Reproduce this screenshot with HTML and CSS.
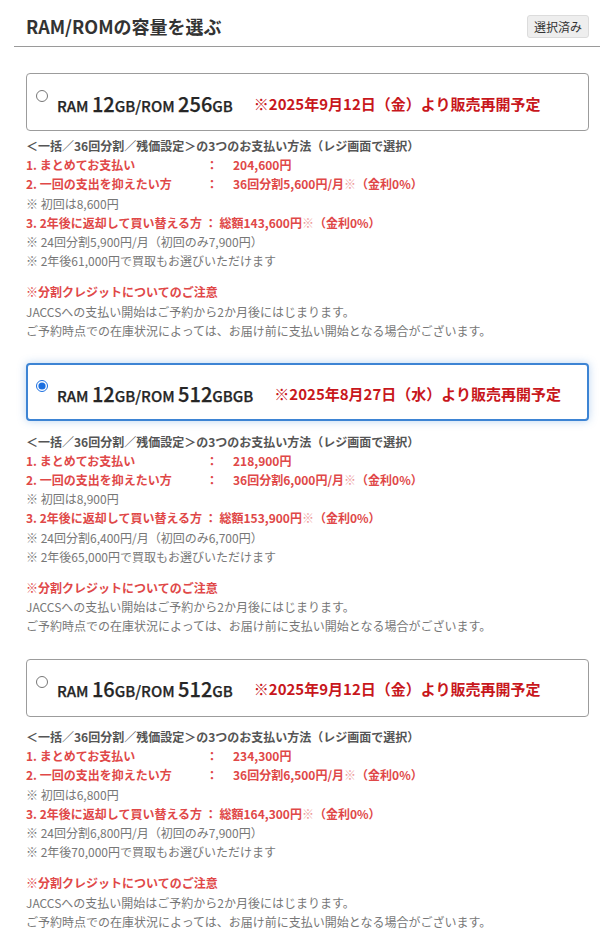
FILE: index.html
```html
<!DOCTYPE html>
<html lang="ja">
<head>
<meta charset="utf-8">
<title>RAM/ROMの容量を選ぶ</title>
<link rel="stylesheet" href="styles.css">
</head>
<body>
<div class="header">
  <h2 class="title">RAM/ROMの容量を選ぶ</h2>
  <span class="badge">選択済み</span>
</div>
<div class="options">
  <label class="card">
    <input class="radio" type="radio" name="cap">
    <span class="spec">RAM <b>12</b>GB/ROM <b>256</b>GB</span>
    <span class="notice">※2025年9月12日（金）より販売再開予定</span>
  </label>
  <div class="pay first">
    <p class="pay-head">＜一括／36回分割／残価設定＞の3つのお支払い方法（レジ画面で選択）</p>
    <p class="red"><span class="lbl">1. まとめてお支払い</span><span class="colon">：</span><span class="val">204,600円</span></p>
    <p class="red"><span class="lbl">2. 一回の支出を抑えたい方</span><span class="colon">：</span><span class="val">36回分割5,600円/月<span class="kome">※</span>（金利0%）</span></p>
    <p class="gray">※ 初回は8,600円</p>
    <p class="red">3. 2年後に返却して買い替える方 ： 総額143,600円<span class="kome">※</span>（金利0%）</p>
    <p class="gray">※ 24回分割5,900円/月（初回のみ7,900円）</p>
    <p class="gray">※ 2年後61,000円で買取もお選びいただけます</p>
  </div>
  <div class="note">
    <p class="note-head">※分割クレジットについてのご注意</p>
    <p class="gray">JACCSへの支払い開始はご予約から2か月後にはじまります。</p>
    <p class="gray">ご予約時点での在庫状況によっては、お届け前に支払い開始となる場合がございます。</p>
  </div>

  <label class="card selected">
    <input class="radio" type="radio" name="cap" checked>
    <span class="spec">RAM <b>12</b>GB/ROM <b>512</b>GBGB</span>
    <span class="notice">※2025年8月27日（水）より販売再開予定</span>
  </label>
  <div class="pay">
    <p class="pay-head">＜一括／36回分割／残価設定＞の3つのお支払い方法（レジ画面で選択）</p>
    <p class="red"><span class="lbl">1. まとめてお支払い</span><span class="colon">：</span><span class="val">218,900円</span></p>
    <p class="red"><span class="lbl">2. 一回の支出を抑えたい方</span><span class="colon">：</span><span class="val">36回分割6,000円/月<span class="kome">※</span>（金利0%）</span></p>
    <p class="gray">※ 初回は8,900円</p>
    <p class="red">3. 2年後に返却して買い替える方 ： 総額153,900円<span class="kome">※</span>（金利0%）</p>
    <p class="gray">※ 24回分割6,400円/月（初回のみ6,700円）</p>
    <p class="gray">※ 2年後65,000円で買取もお選びいただけます</p>
  </div>
  <div class="note">
    <p class="note-head">※分割クレジットについてのご注意</p>
    <p class="gray">JACCSへの支払い開始はご予約から2か月後にはじまります。</p>
    <p class="gray">ご予約時点での在庫状況によっては、お届け前に支払い開始となる場合がございます。</p>
  </div>

  <label class="card">
    <input class="radio" type="radio" name="cap">
    <span class="spec">RAM <b>16</b>GB/ROM <b>512</b>GB</span>
    <span class="notice">※2025年9月12日（金）より販売再開予定</span>
  </label>
  <div class="pay">
    <p class="pay-head">＜一括／36回分割／残価設定＞の3つのお支払い方法（レジ画面で選択）</p>
    <p class="red"><span class="lbl">1. まとめてお支払い</span><span class="colon">：</span><span class="val">234,300円</span></p>
    <p class="red"><span class="lbl">2. 一回の支出を抑えたい方</span><span class="colon">：</span><span class="val">36回分割6,500円/月<span class="kome">※</span>（金利0%）</span></p>
    <p class="gray">※ 初回は6,800円</p>
    <p class="red">3. 2年後に返却して買い替える方 ： 総額164,300円<span class="kome">※</span>（金利0%）</p>
    <p class="gray">※ 24回分割6,800円/月（初回のみ7,900円）</p>
    <p class="gray">※ 2年後70,000円で買取もお選びいただけます</p>
  </div>
  <div class="note">
    <p class="note-head">※分割クレジットについてのご注意</p>
    <p class="gray">JACCSへの支払い開始はご予約から2か月後にはじまります。</p>
    <p class="gray">ご予約時点での在庫状況によっては、お届け前に支払い開始となる場合がございます。</p>
  </div>
</div>
</body>
</html>
```

FILE: styles.css
```css
* { box-sizing: border-box; }
html, body {
  margin: 0;
  padding: 0;
  background: #fff;
}
body {
  font-family: "Noto Sans CJK JP", "Noto Sans", sans-serif;
  color: #333;
}
p { margin: 0; }

.header {
  display: flex;
  align-items: center;
  justify-content: space-between;
  margin: 0 10px 0 14px;
  padding: 12px 11px 5px 12px;
  border-bottom: 1px solid #9a9a9a;
}
.title {
  margin: 0;
  font-size: 18px;
  line-height: 29px;
  font-weight: 700;
  color: #333;
}
.badge {
  display: inline-block;
  height: 23px;
  line-height: 21px;
  padding: 0 6px;
  font-size: 12px;
  color: #333;
  background: #eeeeee;
  border: 1px solid #dcdcdc;
  border-radius: 3px;
}

.options {
  padding: 26px 21px 0 26px;
}

.card {
  display: flex;
  align-items: center;
  height: 58px;
  padding: 0 0 0 9px;
  border: 1px solid #9c9c9c;
  border-radius: 4px;
  background: #fff;
  cursor: pointer;
}
.card.selected {
  border: 2px solid #3d84d4;
  padding-left: 8px;
  box-shadow: 0 0 9px rgba(61, 132, 212, 0.35);
}
.radio {
  align-self: flex-start;
  width: 12px;
  height: 12px;
  margin: 16px 0 0 0;
  accent-color: #1b6fe0;
}
.card.selected .radio { margin-top: 15px; }
.spec {
  margin-left: 9px;
  padding-top: 2px;
  font-size: 15px;
  font-weight: 500;
  color: #262626;
  -webkit-text-stroke: 0.25px #262626;
  white-space: nowrap;
}
.spec b {
  font-size: 20px;
  font-weight: 500;
}
.notice {
  margin-left: 21px;
  padding-top: 2px;
  font-size: 15px;
  font-weight: 700;
  color: #c8171c;
  white-space: nowrap;
}

.pay {
  margin-top: 10.5px;
  font-size: 12px;
  line-height: 19.2px;
}
.pay.first {
  margin-top: 5px;
}
.pay-head {
  font-weight: 700;
  color: #555;
}
.red {
  font-weight: 700;
  color: #e04848;
}
.gray {
  color: #777;
  font-size: 12px;
  line-height: 19.2px;
}
.lbl {
  display: inline-block;
  width: 180px;
}
.colon {
  display: inline-block;
  width: 12px;
}
.val {
  margin-left: 15px;
}
.kome {
  font-weight: 400;
  color: #ee9a9a;
}

.note {
  margin-top: 12px;
  margin-bottom: 23px;
  font-size: 12px;
  line-height: 19.2px;
}
.note-head {
  font-weight: 700;
  color: #e04848;
}
```
